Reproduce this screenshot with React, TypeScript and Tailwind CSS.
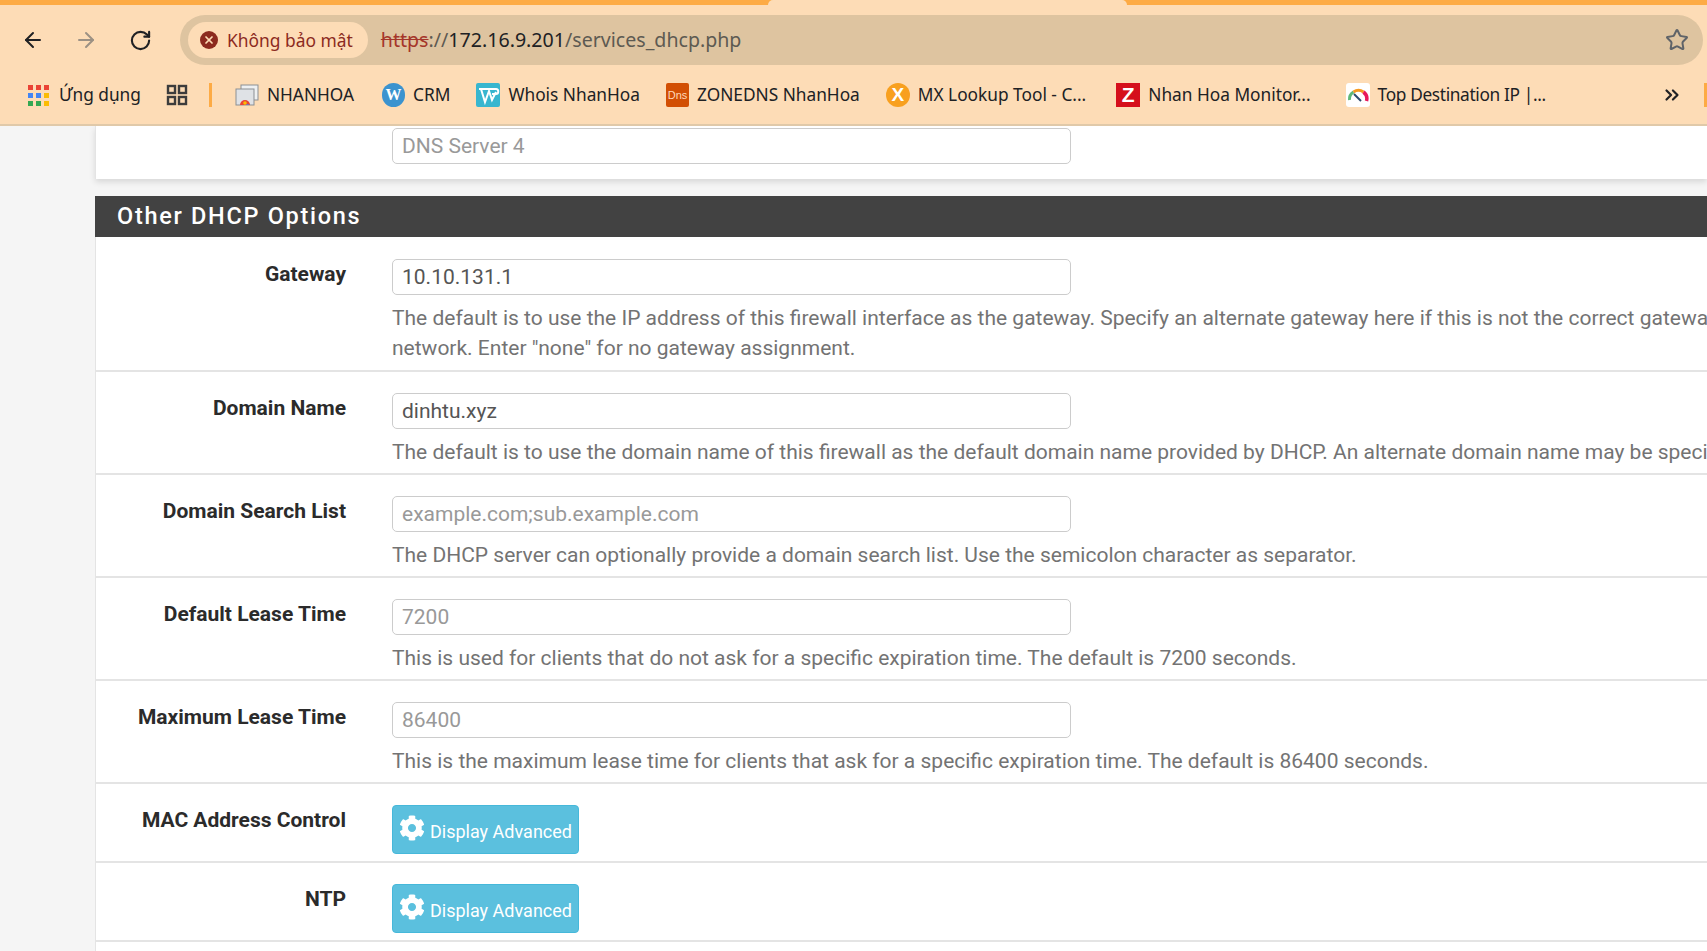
import React from 'react';
import { ArrowLeft, ArrowRight, RotateCw, Star, ChevronsRight, X } from 'lucide-react';
import { FaCog } from 'react-icons/fa';

function GridIcon() {
  const colors = ['#ea4335', '#ea4335', '#ea4335', '#4285f4', '#4285f4', '#fbbc04', '#34a853', '#34a853', '#fbbc04'];
  return (
    <div className="grid grid-cols-3 gap-[3px] w-[21px] h-[21px] mr-[2px]">
      {colors.map((c, i) => (
        <span key={i} className="w-[5px] h-[5px]" style={{ backgroundColor: c }} />
      ))}
    </div>
  );
}

function Bookmark({ icon, label, className }: { icon: React.ReactNode; label: string; className?: string }) {
  return (
    <div className={`flex items-center gap-[8px] text-[17.3px] text-[#202124] whitespace-nowrap ${className ?? ''}`}>
      {icon}
      <span>{label}</span>
    </div>
  );
}

function BrowserBar() {
  return (
    <div className="shrink-0 font-['Noto_Sans',sans-serif]">
      <div className="h-[5px] flex bg-[#fdab45]">
        <div className="ml-[768px] w-[359px] bg-[#fddcb6] rounded-t-[6px]" />
      </div>
      <div className="bg-[#fddcb6] h-[121px] border-b-2 border-[#e0c9a9]">
        <div className="h-[70px] flex items-center">
          <div className="w-[180px] flex items-center shrink-0 pl-[21px] gap-[29px]">
            <ArrowLeft size={24} color="#202124" strokeWidth={2} />
            <ArrowRight size={24} color="#9c9184" strokeWidth={2} />
            <RotateCw size={23} color="#202124" strokeWidth={2.2} className="ml-[2px]" />
          </div>
          <div className="flex-1 mr-[4px] h-[50px] rounded-full bg-[#dec4a0] flex items-center pl-[8px] pr-[14px]">
            <div className="h-[36px] rounded-full bg-[#fddcb6] flex items-center pl-[12px] pr-[15px] gap-[9px] text-[#8c2a1e] text-[17.4px]">
              <span className="w-[18px] h-[18px] rounded-full bg-[#8c2a1e] flex items-center justify-center">
                <X size={12} color="#fddcb6" strokeWidth={3.5} />
              </span>
              Không bảo mật
            </div>
            <div className="ml-[13px] text-[19.6px] text-[#5d5a52] whitespace-nowrap">
              <span className="line-through text-[#a5362a]">https</span>
              <span>://</span>
              <span className="text-[#202124]">172.16.9.201</span>
              <span>/services_dhcp.php</span>
            </div>
            <Star size={24} color="#5f6368" strokeWidth={2} className="ml-auto" />
          </div>
        </div>
        <div className="h-[40px] flex items-center pl-[28px] relative">
          <Bookmark icon={<GridIcon />} label="Ứng dụng" />
          <svg width="22" height="22" viewBox="0 0 22 22" className="ml-[25px]" fill="none" stroke="#3c3c3c" strokeWidth="2.4">
            <rect x="2" y="2" width="7" height="7" />
            <rect x="13" y="2" width="7" height="7" />
            <rect x="2" y="13" width="7" height="7" />
            <rect x="13" y="13" width="7" height="7" />
          </svg>
          <span className="ml-[21px] w-[3px] h-[24px] bg-[#fdab45]" />
          <div className="ml-[23px] flex items-center gap-[26px]">
            <Bookmark
              icon={
                <svg width="24" height="24" viewBox="0 0 24 24">
                  <rect x="6" y="2" width="17" height="15" fill="#eef0f2" stroke="#8b8f94" />
                  <rect x="1" y="6" width="18" height="16" fill="#dfe2e6" stroke="#8b8f94" />
                  <path d="M5 22a5 5 0 0 1 10 0z" fill="#ea4335" />
                  <path d="M10 22a5 5 0 0 1 5 0z" fill="#4285f4" />
                  <circle cx="10" cy="20" r="1.8" fill="#fbbc04" />
                </svg>
              }
              label="NHANHOA"
            />
            <Bookmark
              className="ml-[2px]"
              icon={
                <span className="w-[23px] h-[24px] rounded-full bg-[#3b93cf] text-white font-['Liberation_Serif',serif] font-bold text-[16px] flex items-center justify-center">
                  W
                </span>
              }
              label="CRM"
            />
            <Bookmark
              icon={
                <svg width="24" height="24" viewBox="0 0 24 24">
                  <rect width="24" height="24" rx="2" fill="#38b6cf" />
                  <path d="M3 6h17c3 0 3 5 0 5h-4M5 6l4 13 4-11 3 9 4-8" fill="none" stroke="#fff" strokeWidth="2" />
                </svg>
              }
              label="Whois NhanHoa"
            />
            <Bookmark
              icon={
                <span className="w-[23px] h-[24px] rounded-[2px] bg-[#d24f04] text-[#ffd9b8] font-['Liberation_Sans',sans-serif] text-[11px] flex items-center justify-center">
                  Dns
                </span>
              }
              label="ZONEDNS NhanHoa"
            />
            <Bookmark
              icon={
                <span className="w-[24px] h-[24px] rounded-full bg-[#f8a01f] text-white font-['Liberation_Sans',sans-serif] font-bold text-[19px] flex items-center justify-center">
                  X
                </span>
              }
              label="MX Lookup Tool - C..."
            />
            <Bookmark
              className="ml-[4px]"
              icon={
                <span className="w-[24px] h-[24px] bg-[#d50f1c] text-white font-['Liberation_Sans',sans-serif] font-bold text-[21px] flex items-center justify-center">
                  Z
                </span>
              }
              label="Nhan Hoa Monitor..."
            />
            <Bookmark
              className="ml-[9px] tracking-[-0.35px]"
              icon={
                <svg width="24" height="24" viewBox="0 0 24 24">
                  <rect width="24" height="24" rx="3" fill="#fff" />
                  <path d="M3.5 17a8.5 8.5 0 0 1 4-8" fill="none" stroke="#5fb878" strokeWidth="3" />
                  <path d="M7.5 9a8.5 8.5 0 0 1 10 0" fill="none" stroke="#f59a23" strokeWidth="3" />
                  <path d="M17.5 9a8.5 8.5 0 0 1 3 9" fill="none" stroke="#e8195a" strokeWidth="3.5" />
                  <path d="M8 11l7 7" stroke="#2c4a6e" strokeWidth="2" />
                </svg>
              }
              label="Top Destination IP |..."
            />
          </div>
          <ChevronsRight size={22} color="#202124" strokeWidth={2.4} className="absolute left-[1661px] top-[9px]" />
          <span className="absolute left-[1704px] top-[8px] w-[3px] h-[24px] bg-[#fdab45]" />
        </div>
      </div>
    </div>
  );
}

function Row({ label, children, className }: { label: string; children: React.ReactNode; className: string }) {
  return (
    <div className={`flex border-b-2 border-b-[#e4e4e4] ${className}`}>
      <div className="w-[250px] shrink-0 pt-[21px] text-right font-bold text-[21px] leading-[30px] text-[#2b2b2b]">{label}</div>
      <div className="ml-[46px] pt-[21px] min-w-0 flex-1">{children}</div>
    </div>
  );
}

function Field({ value, placeholder }: { value?: string; placeholder?: string }) {
  return (
    <input
      readOnly
      value={value}
      placeholder={placeholder}
      className="block w-[679px] h-[36px] px-[9px] bg-white border border-[#cccccc] rounded-[5px] text-[21px] text-[#555555] placeholder:text-[#999999] outline-none"
    />
  );
}

function Help({ children }: { children: React.ReactNode }) {
  return <div className="mt-[8px] text-[21px] leading-[30px] text-[#737373] whitespace-nowrap">{children}</div>;
}

function AdvancedButton() {
  return (
    <button className="w-[187px] h-[49px] bg-[#5bc0de] border border-[#46b8da] rounded-[4px] text-white text-[18px] flex items-center pl-[6px] gap-[5px]">
      <FaCog size={26} color="#ffffff" className="mb-[3px]" />
      <span className="mt-[4px]">Display Advanced</span>
    </button>
  );
}

export default function App() {
  return (
    <div className="h-[951px] w-[1707px] overflow-hidden flex flex-col bg-[#f5f5f5] font-['Roboto',sans-serif]">
      <BrowserBar />
      <div className="flex-1 min-h-0 overflow-hidden pl-[95px]">
        <div className="bg-white h-[53px] border-l border-[#e4e4e4] shadow-[0_3px_6px_rgba(0,0,0,0.12)] pl-[296px] pt-[2px]">
          <Field placeholder="DNS Server 4" />
        </div>
        <div className="mt-[17px] bg-[#424242] h-[41px] pl-[22px] flex items-center text-white font-medium text-[23.5px] tracking-[1.7px]">
          Other DHCP Options
        </div>
        <div className="bg-white border-l border-[#e4e4e4]">
          <Row label="Gateway" className="h-[135px] border-t border-t-transparent">
            <Field value="10.10.131.1" />
            <Help>
              The default is to use the IP address of this firewall interface as the gateway. Specify an alternate gateway here if this is not the correct gateway for the
              <br />
              network. Enter "none" for no gateway assignment.
            </Help>
          </Row>
          <Row label="Domain Name" className="h-[103px]">
            <Field value="dinhtu.xyz" />
            <Help>The default is to use the domain name of this firewall as the default domain name provided by DHCP. An alternate domain name may be specified here.</Help>
          </Row>
          <Row label="Domain Search List" className="h-[103px]">
            <Field placeholder="example.com;sub.example.com" />
            <Help>The DHCP server can optionally provide a domain search list. Use the semicolon character as separator.</Help>
          </Row>
          <Row label="Default Lease Time" className="h-[103px]">
            <Field placeholder="7200" />
            <Help>This is used for clients that do not ask for a specific expiration time. The default is 7200 seconds.</Help>
          </Row>
          <Row label="Maximum Lease Time" className="h-[103px]">
            <Field placeholder="86400" />
            <Help>This is the maximum lease time for clients that ask for a specific expiration time. The default is 86400 seconds.</Help>
          </Row>
          <Row label="MAC Address Control" className="h-[79px]">
            <AdvancedButton />
          </Row>
          <Row label="NTP" className="h-[79px]">
            <AdvancedButton />
          </Row>
          <div className="h-[40px]" />
        </div>
      </div>
    </div>
  );
}
